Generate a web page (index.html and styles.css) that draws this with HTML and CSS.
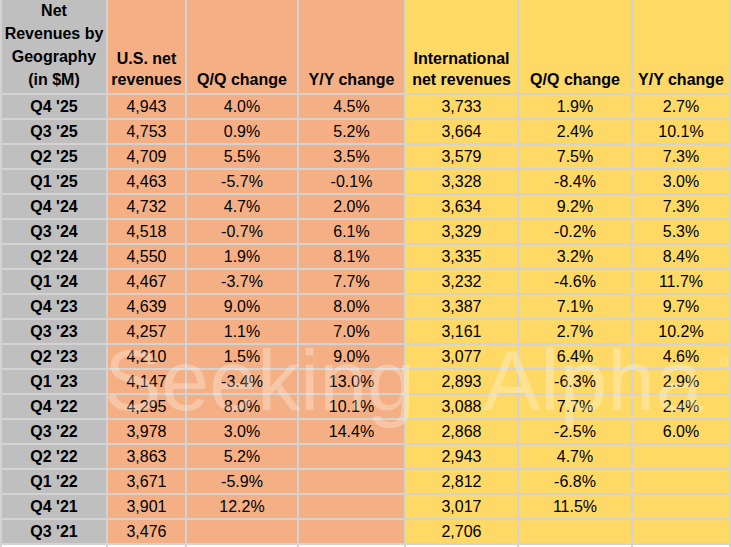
FILE: index.html
```html
<!DOCTYPE html>
<html lang="en">
<head>
<meta charset="utf-8">
<title>Net Revenues by Geography</title>
<link rel="stylesheet" href="styles.css">
</head>
<body>
<div class="wrap">
  <div class="sheet">
    <div class="c lbl hd-lbl"><span>Net<br>Revenues by<br>Geography<br>(in $M)</span></div>
    <div class="c us hd">U.S. net<br>revenues</div>
    <div class="c us hd">Q/Q change</div>
    <div class="c us hd">Y/Y change</div>
    <div class="c intl hd">International<br>net revenues</div>
    <div class="c intl hd">Q/Q change</div>
    <div class="c intl hd">Y/Y change</div>

    <div class="c lbl">Q4 '25</div><div class="c us">4,943</div><div class="c us">4.0%</div><div class="c us">4.5%</div><div class="c intl">3,733</div><div class="c intl">1.9%</div><div class="c intl">2.7%</div>
    <div class="c lbl">Q3 '25</div><div class="c us">4,753</div><div class="c us">0.9%</div><div class="c us">5.2%</div><div class="c intl">3,664</div><div class="c intl">2.4%</div><div class="c intl">10.1%</div>
    <div class="c lbl">Q2 '25</div><div class="c us">4,709</div><div class="c us">5.5%</div><div class="c us">3.5%</div><div class="c intl">3,579</div><div class="c intl">7.5%</div><div class="c intl">7.3%</div>
    <div class="c lbl">Q1 '25</div><div class="c us">4,463</div><div class="c us">-5.7%</div><div class="c us">-0.1%</div><div class="c intl">3,328</div><div class="c intl">-8.4%</div><div class="c intl">3.0%</div>
    <div class="c lbl">Q4 '24</div><div class="c us">4,732</div><div class="c us">4.7%</div><div class="c us">2.0%</div><div class="c intl">3,634</div><div class="c intl">9.2%</div><div class="c intl">7.3%</div>
    <div class="c lbl">Q3 '24</div><div class="c us">4,518</div><div class="c us">-0.7%</div><div class="c us">6.1%</div><div class="c intl">3,329</div><div class="c intl">-0.2%</div><div class="c intl">5.3%</div>
    <div class="c lbl">Q2 '24</div><div class="c us">4,550</div><div class="c us">1.9%</div><div class="c us">8.1%</div><div class="c intl">3,335</div><div class="c intl">3.2%</div><div class="c intl">8.4%</div>
    <div class="c lbl">Q1 '24</div><div class="c us">4,467</div><div class="c us">-3.7%</div><div class="c us">7.7%</div><div class="c intl">3,232</div><div class="c intl">-4.6%</div><div class="c intl">11.7%</div>
    <div class="c lbl">Q4 '23</div><div class="c us">4,639</div><div class="c us">9.0%</div><div class="c us">8.0%</div><div class="c intl">3,387</div><div class="c intl">7.1%</div><div class="c intl">9.7%</div>
    <div class="c lbl">Q3 '23</div><div class="c us">4,257</div><div class="c us">1.1%</div><div class="c us">7.0%</div><div class="c intl">3,161</div><div class="c intl">2.7%</div><div class="c intl">10.2%</div>
    <div class="c lbl">Q2 '23</div><div class="c us">4,210</div><div class="c us">1.5%</div><div class="c us">9.0%</div><div class="c intl">3,077</div><div class="c intl">6.4%</div><div class="c intl">4.6%</div>
    <div class="c lbl">Q1 '23</div><div class="c us">4,147</div><div class="c us">-3.4%</div><div class="c us">13.0%</div><div class="c intl">2,893</div><div class="c intl">-6.3%</div><div class="c intl">2.9%</div>
    <div class="c lbl">Q4 '22</div><div class="c us">4,295</div><div class="c us">8.0%</div><div class="c us">10.1%</div><div class="c intl">3,088</div><div class="c intl">7.7%</div><div class="c intl">2.4%</div>
    <div class="c lbl">Q3 '22</div><div class="c us">3,978</div><div class="c us">3.0%</div><div class="c us">14.4%</div><div class="c intl">2,868</div><div class="c intl">-2.5%</div><div class="c intl">6.0%</div>
    <div class="c lbl">Q2 '22</div><div class="c us">3,863</div><div class="c us">5.2%</div><div class="c us"></div><div class="c intl">2,943</div><div class="c intl">4.7%</div><div class="c intl"></div>
    <div class="c lbl">Q1 '22</div><div class="c us">3,671</div><div class="c us">-5.9%</div><div class="c us"></div><div class="c intl">2,812</div><div class="c intl">-6.8%</div><div class="c intl"></div>
    <div class="c lbl">Q4 '21</div><div class="c us">3,901</div><div class="c us">12.2%</div><div class="c us"></div><div class="c intl">3,017</div><div class="c intl">11.5%</div><div class="c intl"></div>
    <div class="c lbl">Q3 '21</div><div class="c us">3,476</div><div class="c us"></div><div class="c us"></div><div class="c intl">2,706</div><div class="c intl"></div><div class="c intl"></div>

    <div class="c blank"></div><div class="c blank"></div><div class="c blank"></div><div class="c blank"></div><div class="c blank"></div><div class="c blank"></div><div class="c blank"></div>
  </div>
  <div class="watermark"><span class="wm-a">Seeking</span><span class="wm-b">Alpha</span><span class="wm-c">α</span></div>
</div>
</body>
</html>
```

FILE: styles.css
```css
html, body {
  margin: 0;
  padding: 0;
  background: #ffffff;
}

body {
  font-family: "Liberation Sans", Arial, sans-serif;
  color: #000;
  overflow: hidden;
}

.wrap {
  position: relative;
  width: 731px;
  height: 547px;
  overflow: hidden;
}

.sheet {
  display: grid;
  grid-template-columns: 104px 77px 110px 105px 111px 112px 96px;
  grid-template-rows: 93px repeat(18, 23px) 20px;
  gap: 2px;
  padding: 0 2px;
  background: #d3d3d3;
  width: max-content;
}

.c {
  font-size: 16px;
  line-height: 23px;
  text-align: center;
  white-space: nowrap;
}

.lbl {
  background: #bfbfbf;
  font-weight: bold;
}

.us {
  background: #f4b084;
}

.intl {
  background: #ffd966;
}

.blank {
  background: #ffffff;
}

.hd {
  font-weight: bold;
  line-height: 21px;
  display: flex;
  align-items: flex-end;
  justify-content: center;
  padding-bottom: 3px;
  box-sizing: border-box;
}

.hd-lbl {
  display: flex;
  align-items: flex-end;
  justify-content: center;
  padding-bottom: 2px;
  box-sizing: border-box;
  line-height: 23px;
}

.watermark {
  position: absolute;
  left: 0;
  top: 337px;
  width: 731px;
  height: 100px;
  pointer-events: none;
  color: rgba(255, 255, 255, 0.28);
  font-family: "Liberation Sans", Arial, sans-serif;
  font-size: 86px;
  line-height: 86px;
}

.wm-a {
  position: absolute;
  left: 104px;
  top: 0;
}

.wm-b {
  position: absolute;
  left: 483px;
  top: 0;
}

.wm-c {
  position: absolute;
  left: 720px;
  top: 16px;
  font-size: 16px;
  line-height: 16px;
}
```
